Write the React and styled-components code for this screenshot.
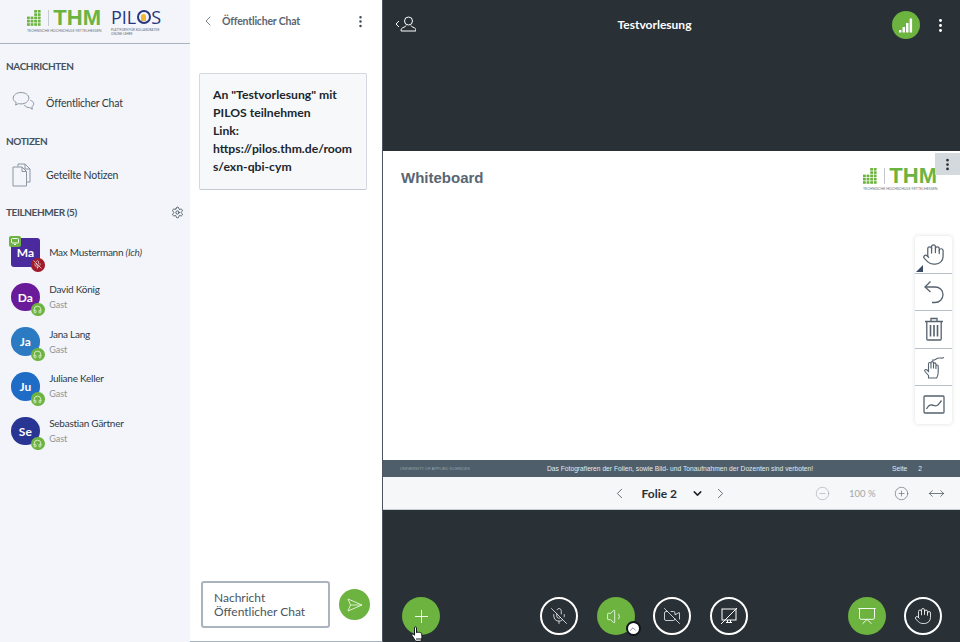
import React from 'react';
import styled, { createGlobalStyle } from 'styled-components';
import {
  ChevronDown, ChevronLeft, ChevronRight, ChevronUp, CircleMinus, CirclePlus, EllipsisVertical, Hand, Headphones,
  MicOff, MoveHorizontal, Plus, Presentation, Settings, VideoOff, Volume1,
} from 'lucide-react';

const GREEN = '#6cb340';
const DARK = '#2a3136';

const GlobalStyle = createGlobalStyle`
  html, body { margin: 0; padding: 0; height: 100%; background: ${DARK}; }
  body { font-family: Lato, "Noto Sans", sans-serif; overflow: hidden; }
  #root { height: 100%; }
`;

const participants = [
  { id: 'da', initials: 'Da', name: 'David König', color: '#6a1b9a' },
  { id: 'ja', initials: 'Ja', name: 'Jana Lang', color: '#2b7ac2' },
  { id: 'ju', initials: 'Ju', name: 'Juliane Keller', color: '#1f6cc6' },
  { id: 'se', initials: 'Se', name: 'Sebastian Gärtner', color: '#283593' },
];

const ThmGrid = () => {
  const cells = [];
  [[2, 3], [2, 3], [0, 1, 2, 3], [0, 1, 2, 3], [0, 1, 2, 3]].forEach((row, y) => {
    row.forEach((x) => cells.push(<rect key={`${x}-${y}`} x={x * 3.6} y={y * 3.3} width="2.800" height="2.600" fill={GREEN} />));
  });
  return <svg width="14" height="16" viewBox="0 0 14 16">{cells}</svg>;
};

const ThmBrand = () => (
  <ThmLogo>
    <ThmRow>
      <ThmGrid />
      <ThmDivider />
      <ThmMark>THM</ThmMark>
    </ThmRow>
    <ThmCaption>TECHNISCHE HOCHSCHULE MITTELHESSEN</ThmCaption>
  </ThmLogo>
);

const ChatBubbles = () => (
  <svg width="23" height="23" viewBox="0 0 23 23" fill="none" stroke="#8b96a1" strokeWidth="1">
    <path d="M9 1.500c4.400 0 7.800 2.400 7.800 5.700s-3.400 5.700-7.800 5.700c-.9 0-1.600-.1-2.300-.3L3.600 14l.6-2.600C2.300 10.400 1.200 8.900 1.200 7.200 1.200 3.900 4.600 1.500 9 1.500z" />
    <path d="M18.300 9.300c2 .6 3.400 1.800 3.400 3.500 0 1.200-.7 2.200-1.800 2.900l.4 2.600-2.700-1.700c-2 .1-4.400-.9-5.300-2.700" />
  </svg>
);

const NotesIcon = () => (
  <svg width="19" height="24" viewBox="0 0 19 24" fill="none" stroke="#8b96a1" strokeWidth="1">
    <path d="M6 3.500V1h7l5 5v13h-3" />
    <path d="M1 4h9l4.500 4.500V23H1z" />
    <path d="M10 4v4.500h4.500M13 1v5h5" />
  </svg>
);

const UserToggle = () => (
  <svg width="21" height="16" viewBox="0 0 21 16" fill="none" stroke="#fff" strokeWidth="1">
    <path d="M4 5 1 8l3 3" />
    <circle cx="13.500" cy="5" r="4" />
    <path d="M11 9.500c0 1.500-3.500 1.800-4.500 3.200-.4.600-.4 1.300-.4 2.300h14.800c0-1 0-1.700-.4-2.300-1-1.400-4.500-1.700-4.500-3.200" />
  </svg>
);

const SignalBars = () => (
  <svg width="16" height="16" viewBox="0 0 16 16" fill="#fff">
    <rect x="1" y="13" width="2.400" height="2.500" />
    <rect x="4.500" y="10" width="2.500" height="5.500" />
    <rect x="8" y="6" width="2.500" height="9.500" />
    <rect x="11.600" y="1.500" width="2.500" height="14" />
  </svg>
);

const UndoArc = () => (
  <svg width="22" height="24" viewBox="0 0 22 24" fill="none" stroke="#56626e" strokeWidth="1.300">
    <path d="M7.500 1.500 2 7l5.500 5" />
    <path d="M2 7h10c5 0 8 3.500 8 7.500 0 4.500-3.500 8-8 8H9" />
  </svg>
);

const TrashBin = () => (
  <svg width="20" height="24" viewBox="0 0 20 24" fill="none" stroke="#56626e" strokeWidth="1.300">
    <path d="M1 4.500h18M7 4.500V1.500h6v3" />
    <path d="M2.800 4.500V22a1 1 0 0 0 1 1h12.400a1 1 0 0 0 1-1V4.500" />
    <path d="M6.500 8v11.500M10 8v11.500M13.500 8v11.500" strokeWidth="1.600" />
  </svg>
);

const SwipeHand = () => (
  <svg width="24" height="26" viewBox="0 0 24 26" fill="none" stroke="#56626e" strokeWidth="1.100">
    <path d="M10 6c3 1 4-2 7-2 2 0 3 .5 5-.5" />
    <path d="M6.500 21.500 3 17.500c-1-1.500.8-2.700 2-1.500l1.500 1.500V9.800c0-1.800 2.500-1.800 2.500 0v4.700V8.800c0-1.600 2.500-1.600 2.500 0v5.700-4.500c0-1.500 2.400-1.500 2.400 0v5l.1-3c0-1.400 2.200-1.400 2.200 0v6c0 3.500-1.500 6-1.500 6h-8.200z" />
  </svg>
);

const ChartBox = () => (
  <svg width="22" height="19" viewBox="0 0 22 19" fill="none" stroke="#56626e" strokeWidth="1.300">
    <rect x="1" y="1" width="20" height="17" rx="1" />
    <path d="M3.500 14c2-3.500 3.500-4.500 5.500-4s3 1.500 5 .5 3-3 4.500-5" />
  </svg>
);

const SendIcon = () => (
  <svg width="16" height="14" viewBox="0 0 16 14" fill="none" stroke="#dff0d0" strokeWidth="1">
    <path d="M1 1l14 6-14 6 2.500-6zM3.500 7H15" />
  </svg>
);

const MonitorCrossed = () => (
  <svg width="18" height="18" viewBox="0 0 18 18" fill="none" stroke="#fff" strokeWidth="1">
    <rect x="2" y="2" width="14" height="11" />
    <path d="M6 15.500h6M7.500 13v2.500M10.500 13v2.500M1 17 17 1" />
  </svg>
);

const PointerHand = () => (
  <svg width="14" height="17" viewBox="0 0 14 17" fill="#fff" stroke="#15181b" strokeWidth="1">
    <path d="M3.500 1.800c0-1.200 2-1.200 2 0v5l.5-.5c.6-.4 1.300-.3 1.500.2.600-.5 1.400-.3 1.600.3.700-.4 1.500 0 1.500.7l.4 3.500c0 1.700-.5 3.200-1.200 4.500H4.800L1 9.500c-.6-1 .5-2 1.500-1.200l1 1z" />
    <path d="M6 12v2.500M8 12v2.500M10 12v2.500" />
  </svg>
);

function App () {
  return (
    <Page>
      <GlobalStyle />
      <Sidebar>
        <LogoBar>
          <ThmBrand />
          <Pilos>
            <PilosWord>
              PIL
              <PilosO><PilosBulb /></PilosO>
              S
            </PilosWord>
            <PilosCaption>
              PLATTFORM FÜR KOLLABORATIVE
              <br />
              ONLINE-LEHRE
            </PilosCaption>
          </Pilos>
        </LogoBar>
        <SectionTitle>NACHRICHTEN</SectionTitle>
        <NavRow gap="11px">
          <NavIcon><ChatBubbles /></NavIcon>
          Öffentlicher Chat
        </NavRow>
        <SectionTitle gap="13px">NOTIZEN</SectionTitle>
        <NavRow gap="8px">
          <NavIcon><NotesIcon /></NavIcon>
          Geteilte Notizen
        </NavRow>
        <ParticipantsTitle>
          TEILNEHMER (5)
          <Settings size={13} strokeWidth={1.600} color="#3e4a55" />
        </ParticipantsTitle>
        <ParticipantList>
          <Participant>
            <Avatar color="#4a2a9c" square>
              Ma
              <PresenterBadge>
                <svg width="8" height="7" viewBox="0 0 8 7" fill="none" stroke="#fff" strokeWidth="1"><rect x=".5" y=".5" width="7" height="4.500" rx="1" /><path d="M3 6.500h2" /></svg>
              </PresenterBadge>
              <StatusBadge muted><MicOff size={9} strokeWidth={1.600} color="#fff" /></StatusBadge>
            </Avatar>
            <ParticipantName>
              Max Mustermann <em>(Ich)</em>
            </ParticipantName>
          </Participant>
          {participants.map((item) => (
            <Participant key={item.id}>
              <Avatar color={item.color}>
                {item.initials}
                <StatusBadge><Headphones size={9} strokeWidth={1.800} color="#fff" /></StatusBadge>
              </Avatar>
              <div>
                <ParticipantName>{item.name}</ParticipantName>
                <ParticipantRole>Gast</ParticipantRole>
              </div>
            </Participant>
          ))}
        </ParticipantList>
      </Sidebar>

      <ChatPanel>
        <ChatHeader>
          <ChevronLeft size={16} strokeWidth={1.200} color="#56626e" />
          <ChatTitle>Öffentlicher Chat</ChatTitle>
          <EllipsisVertical size={15} strokeWidth={2} color="#3e4a55" />
        </ChatHeader>
        <WelcomeCard>
          An "Testvorlesung" mit PILOS teilnehmen
          <br />
          Link:
          <br />
          <WelcomeLink>https://pilos.thm.de/rooms/exn-qbi-cym</WelcomeLink>
        </WelcomeCard>
        <InputRow>
          <MessageInput>
            Nachricht
            <br />
            Öffentlicher Chat
          </MessageInput>
          <SendButton><SendIcon /></SendButton>
        </InputRow>
      </ChatPanel>

      <Main>
        <TopBar>
          <UserToggle />
          <RoomTitle>Testvorlesung</RoomTitle>
          <TopActions>
            <SignalButton><SignalBars /></SignalButton>
            <EllipsisVertical size={17} strokeWidth={2.200} color="#fff" />
          </TopActions>
        </TopBar>

        <Stage>
          <StageMenu><EllipsisVertical size={15} strokeWidth={2.400} color="#2a3136" /></StageMenu>
          <SlideHeader>
            <SlideTitle>Whiteboard</SlideTitle>
            <ThmBrand />
          </SlideHeader>
          <Tools>
            <Tool corner><Hand size={23} strokeWidth={1.300} /></Tool>
            <Tool><UndoArc /></Tool>
            <Tool><TrashBin /></Tool>
            <Tool><SwipeHand /></Tool>
            <Tool><ChartBox /></Tool>
          </Tools>
          <SlideFooter>
            <SlideFooterFaint>UNIVERSITY OF APPLIED SCIENCES</SlideFooterFaint>
            <SlideNotice>Das Fotografieren der Folien, sowie Bild- und Tonaufnahmen der Dozenten sind verboten!</SlideNotice>
            <SlidePage>
              <span>Seite</span>
              <span>2</span>
            </SlidePage>
          </SlideFooter>
          <PresentationBar>
            <SlidePicker>
              <ChevronLeft size={17} strokeWidth={1.100} color="#3e4a55" />
              <SlideLabel>Folie 2</SlideLabel>
              <ChevronDown size={13} strokeWidth={2.800} color="#20262c" />
              <NextIcon size={17} strokeWidth={1.100} color="#3e4a55" />
            </SlidePicker>
            <ZoomControls>
              <CircleMinus size={15} strokeWidth={0.900} color="#98a1a9" />
              <ZoomLabel>100 %</ZoomLabel>
              <CirclePlus size={15} strokeWidth={0.900} color="#4a5560" />
              <MoveHorizontal size={17} strokeWidth={1} color="#3e4a55" />
            </ZoomControls>
          </PresentationBar>
        </Stage>

        <ActionBar>
          <ActionButton active><Plus size={21} strokeWidth={1} color="#fff" /><Cursor><PointerHand /></Cursor></ActionButton>
          <ActionGroup>
            <ActionButton><MicOff size={18} strokeWidth={1} color="#fff" /></ActionButton>
            <ActionButton active>
              <Volume1 size={19} strokeWidth={1} color="#fff" />
              <AudioToggle><ChevronUp size={10} strokeWidth={1.600} color="#56626e" /></AudioToggle>
            </ActionButton>
            <ActionButton><VideoOff size={18} strokeWidth={1} color="#fff" /></ActionButton>
            <ActionButton><MonitorCrossed /></ActionButton>
          </ActionGroup>
          <ActionGroup>
            <ActionButton active><Presentation size={20} strokeWidth={1.100} color="#fff" /></ActionButton>
            <ActionButton><Hand size={18} strokeWidth={1.100} color="#fff" /></ActionButton>
          </ActionGroup>
        </ActionBar>
      </Main>
    </Page>
  );
}

const Page = styled.div`
  display: flex;
  width: 960px;
  height: 642px;
  overflow: hidden;
`;

const Sidebar = styled.aside`
  display: flex;
  flex-direction: column;
  flex: 0 0 190px;
  background: #f3f5fa;
  color: #2f3a44;
`;

const LogoBar = styled.div`
  display: flex;
  align-items: flex-start;
  gap: 10px;
  height: 33px;
  padding: 10px 0 0 27px;
  border-bottom: 1px solid #a9b4bf;
`;

const ThmLogo = styled.div`
  display: flex;
  flex-direction: column;
  width: 74px;
`;

const ThmRow = styled.div`
  display: flex;
  align-items: flex-start;
  justify-content: space-between;
  height: 18px;
`;

const ThmDivider = styled.div`
  width: 1px;
  height: 16px;
  margin-left: 2px;
  background: #c4cacf;
`;

const ThmMark = styled.div`
  color: ${GREEN};
  font-family: "Liberation Sans", sans-serif;
  font-size: 22px;
  line-height: 16px;
  font-weight: 700;
`;

const ThmCaption = styled.div`
  color: #69737c;
  font-size: 3.600px;
  line-height: 5px;
  white-space: nowrap;
`;

const Pilos = styled.div`
  display: flex;
  flex-direction: column;
  margin-top: -1px;
`;

const PilosWord = styled.div`
  display: flex;
  align-items: center;
  color: #27367f;
  font-family: "Open Sans", sans-serif;
  font-size: 18px;
  line-height: 16px;
`;

const PilosO = styled.span`
  display: flex;
  align-items: center;
  justify-content: center;
  width: 14px;
  height: 14px;
  margin: 0 .5px;
  box-sizing: border-box;
  border: 2px solid #27367f;
  border-radius: 50%;
`;

const PilosBulb = styled.span`
  width: 5px;
  height: 7px;
  border-radius: 3px 3px 1px 1px;
  background: #f2b632;
`;

const PilosCaption = styled.div`
  margin-top: 4px;
  color: #5a6570;
  font-size: 3px;
  line-height: 3.500px;
  white-space: nowrap;
`;

const SectionTitle = styled.div`
  margin-top: ${(props) => props.gap || '15px'};
  padding-left: 6px;
  font-size: 10px;
  line-height: 14px;
  font-weight: 700;
  letter-spacing: -.4px;
  color: #46525d;
`;

const NavRow = styled.div`
  display: flex;
  align-items: center;
  height: 37px;
  margin-top: ${(props) => props.gap};
  padding-left: 12px;
  font-size: 10.500px;
  letter-spacing: -.2px;
  color: #2f3a44;
`;

const NavIcon = styled.span`
  display: flex;
  align-items: center;
  width: 34px;
`;

const ParticipantsTitle = styled(SectionTitle)`
  display: flex;
  align-items: center;
  justify-content: space-between;
  margin-top: 12px;
  padding-right: 6px;
`;

const ParticipantList = styled.div`
  display: flex;
  flex-direction: column;
  gap: 16px;
  margin-top: 19px;
  padding-left: 11px;
`;

const Participant = styled.div`
  display: flex;
  align-items: center;
  gap: 9.500px;
`;

const Avatar = styled.div`
  position: relative;
  display: flex;
  align-items: center;
  justify-content: center;
  flex: 0 0 28.700px;
  height: 28.700px;
  border-radius: ${(props) => (props.square ? '3px' : '50%')};
  background: ${(props) => props.color};
  color: #fff;
  font-size: 12px;
  font-weight: 700;
`;

const StatusBadge = styled.span`
  position: absolute;
  right: -5px;
  bottom: -5px;
  display: flex;
  align-items: center;
  justify-content: center;
  width: 13.500px;
  height: 13.500px;
  border-radius: 50%;
  background: ${(props) => (props.muted ? '#a01c2c' : GREEN)};
`;

const PresenterBadge = styled.span`
  position: absolute;
  left: -2px;
  top: -2px;
  display: flex;
  align-items: center;
  justify-content: center;
  width: 12px;
  height: 11px;
  border-radius: 2px;
  background: ${GREEN};
`;

const ParticipantName = styled.div`
  font-size: 10px;
  line-height: 13px;
  letter-spacing: -.25px;
  color: #2f3a44;
  em { color: #3e4a55; }
`;

const ParticipantRole = styled.div`
  margin-top: 2px;
  font-size: 9px;
  line-height: 13px;
  color: #8b949c;
`;

const ChatPanel = styled.section`
  display: flex;
  flex-direction: column;
  flex: 0 0 193px;
  box-sizing: border-box;
  background: #fff;
  border-right: 1px solid #4a5560;
  border-bottom: 1px solid #a9b4bf;
`;

const ChatHeader = styled.div`
  display: flex;
  align-items: center;
  height: 42px;
  padding: 0 14px 0 10px;
`;

const ChatTitle = styled.h2`
  flex: 1;
  margin: 0 0 0 6px;
  font-size: 10.500px;
  font-weight: 700;
  letter-spacing: -.2px;
  color: #5a6570;
`;

const WelcomeCard = styled.div`
  margin: 31px 15px 0 9px;
  padding: 12px 12px 13px 13px;
  border: 1px solid #d3d9df;
  border-bottom-color: #c3cad1;
  border-radius: 2px;
  background: #f6f8fa;
  font-size: 12.200px;
  line-height: 18px;
  font-weight: 700;
  color: #20262c;
`;

const WelcomeLink = styled.span`
  word-break: break-all;
`;

const InputRow = styled.div`
  display: flex;
  align-items: center;
  gap: 9px;
  margin-top: auto;
  padding: 0 11px 13px;
`;

const MessageInput = styled.div`
  flex: 0 0 129px;
  box-sizing: border-box;
  height: 47px;
  padding: 8px 0 0 11px;
  border: 2px solid #a9b4bf;
  border-radius: 3px;
  font-size: 12px;
  line-height: 14px;
  color: #4a5560;
`;

const SendButton = styled.button`
  display: flex;
  align-items: center;
  justify-content: center;
  width: 31px;
  height: 31px;
  padding: 0;
  border: 0;
  border-radius: 50%;
  background: ${GREEN};
`;

const Main = styled.main`
  display: flex;
  flex-direction: column;
  flex: 1;
  min-width: 0;
  background: ${DARK};
`;

const TopBar = styled.header`
  position: relative;
  display: flex;
  align-items: flex-start;
  justify-content: space-between;
  height: 151px;
  box-sizing: border-box;
  padding: 16px 11px 0 12px;
`;

const RoomTitle = styled.h1`
  position: absolute;
  left: 0;
  right: 34px;
  top: 16px;
  margin: 0;
  text-align: center;
  font-size: 12px;
  line-height: 17px;
  font-weight: 700;
  color: #fff;
`;

const TopActions = styled.div`
  display: flex;
  align-items: center;
  gap: 12px;
  margin-top: -5px;
`;

const SignalButton = styled.div`
  display: flex;
  align-items: center;
  justify-content: center;
  width: 28px;
  height: 28px;
  border-radius: 50%;
  background: ${GREEN};
`;

const Stage = styled.div`
  position: relative;
  display: flex;
  flex-direction: column;
  height: 359px;
  background: #fff;
`;

const StageMenu = styled.div`
  position: absolute;
  right: 0;
  top: 2px;
  display: flex;
  align-items: center;
  justify-content: center;
  width: 25px;
  height: 22px;
  background: #d4d9dd;
`;

const SlideHeader = styled.div`
  display: flex;
  align-items: flex-start;
  justify-content: space-between;
  flex: 1;
  padding: 17px 23px 0 18px;
`;

const SlideTitle = styled.div`
  font-family: "Liberation Sans", sans-serif;
  font-size: 15px;
  line-height: 20px;
  font-weight: 700;
  color: #596673;
`;

const Tools = styled.div`
  position: absolute;
  right: 8px;
  top: 85px;
  width: 37px;
  background: #fff;
  box-shadow: 0 0 4px rgba(60, 70, 80, .18);
  border-radius: 4px;
`;

const Tool = styled.div`
  position: relative;
  display: flex;
  align-items: center;
  justify-content: center;
  height: 37.500px;
  color: #56626e;
  border-bottom: 1px solid #b8bfc6;
  box-sizing: border-box;
  &:last-child { border-bottom: 0; }
  ${(props) => props.corner && `
    &::after {
      content: '';
      position: absolute;
      left: 1px;
      bottom: 1px;
      border-style: solid;
      border-width: 0 0 7px 7px;
      border-color: transparent transparent #3e4a66 transparent;
    }
  `}
`;

const SlideFooter = styled.div`
  display: flex;
  align-items: center;
  height: 17px;
  padding: 0 38px 0 17px;
  background: #4e5f6b;
  font-family: "Liberation Sans", sans-serif;
  font-size: 6.700px;
  color: #e4e8eb;
`;

const SlideFooterFaint = styled.span`
  flex: 0 0 147px;
  font-size: 4px;
  color: #97a3ac;
`;

const SlideNotice = styled.span`
  flex: 1;
  white-space: nowrap;
`;

const SlidePage = styled.span`
  display: flex;
  gap: 11px;
`;

const PresentationBar = styled.div`
  position: relative;
  display: flex;
  align-items: center;
  justify-content: flex-end;
  height: 33px;
  box-sizing: border-box;
  padding-right: 15.500px;
  background: #f6f7f9;
  border-bottom: 1px solid #c6ccd1;
`;

const SlidePicker = styled.div`
  position: absolute;
  left: 227.500px;
  display: flex;
  align-items: center;
  gap: 14px;
`;

const NextIcon = styled(ChevronRight)`
  margin-left: -6px;
`;

const SlideLabel = styled.span`
  font-size: 12px;
  font-weight: 700;
  color: #2a3136;
`;

const ZoomControls = styled.div`
  display: flex;
  align-items: center;
  gap: 18.500px;
`;

const ZoomLabel = styled.span`
  font-size: 9.500px;
  color: #a0a8af;
`;

const ActionBar = styled.div`
  display: flex;
  align-items: flex-end;
  justify-content: space-between;
  flex: 1;
  padding: 0 18px 7px 19px;
`;

const ActionGroup = styled.div`
  display: flex;
  gap: 18.500px;
`;

const ActionButton = styled.div`
  position: relative;
  display: flex;
  align-items: center;
  justify-content: center;
  width: 38px;
  height: 38px;
  box-sizing: border-box;
  border-radius: 50%;
  border: ${(props) => (props.active ? '0' : '2.500px solid #fff')};
  background: ${(props) => (props.active ? GREEN : 'transparent')};
`;

const AudioToggle = styled.span`
  position: absolute;
  right: -6px;
  bottom: -1px;
  display: flex;
  align-items: center;
  justify-content: center;
  width: 15px;
  height: 15px;
  box-sizing: border-box;
  border: 2px solid #10161c;
  border-radius: 50%;
  background: #fff;
`;

const Cursor = styled.span`
  position: absolute;
  left: 9px;
  top: 29px;
  display: flex;
`;

export default App;
